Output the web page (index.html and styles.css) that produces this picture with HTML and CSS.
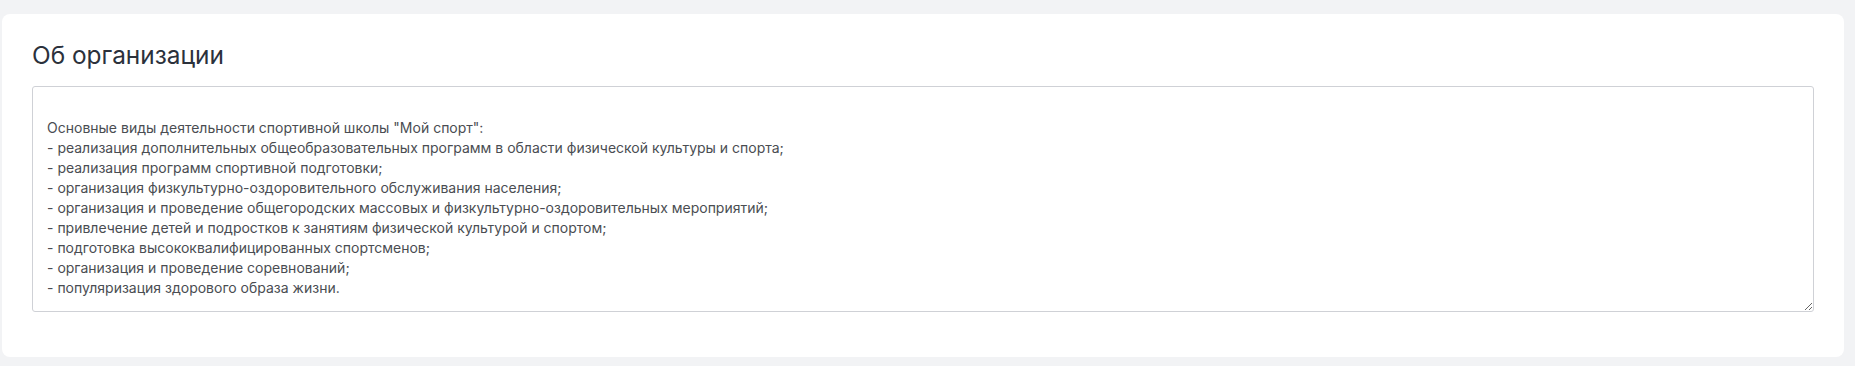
FILE: index.html
```html
<!DOCTYPE html>
<html>
<head>
  <title>Об организации</title>
  <link rel="stylesheet" href="styles.css">
</head>
<body>
  <div class="card">
    <h2 class="card-title">Об организации</h2>
    <textarea class="about-text">

Основные виды деятельности спортивной школы "Мой спорт":
- реализация дополнительных общеобразовательных программ в области физической культуры и спорта;
- реализация программ спортивной подготовки;
- организация физкультурно-оздоровительного обслуживания населения;
- организация и проведение общегородских массовых и физкультурно-оздоровительных мероприятий;
- привлечение детей и подростков к занятиям физической культурой и спортом;
- подготовка высококвалифицированных спортсменов;
- организация и проведение соревнований;
- популяризация здорового образа жизни.</textarea>
  </div>
</body>
</html>
```

FILE: styles.css
```css
body {
  margin: 0;
  padding: 14px 11px 9px 2px;
  background-color: #f2f3f5;
  font-family: Inter, "Noto Sans", sans-serif;
}

.card {
  background-color: #fff;
  border-radius: 8px;
  padding: 27px 30px 45px 30px;
}

.card-title {
  margin: 0 0 16px 0;
  font-size: 24.4px;
  font-weight: 400;
  line-height: 29px;
  color: #2b313b;
}

.about-text {
  display: block;
  box-sizing: border-box;
  width: 100%;
  height: 226px;
  margin: 0;
  padding: 11px 14px;
  border: 1px solid #cfd1d6;
  border-radius: 3px;
  font-family: Inter, "Noto Sans", sans-serif;
  font-size: 14px;
  line-height: 20px;
  color: #4a4d52;
  background-color: #fff;
}
```
